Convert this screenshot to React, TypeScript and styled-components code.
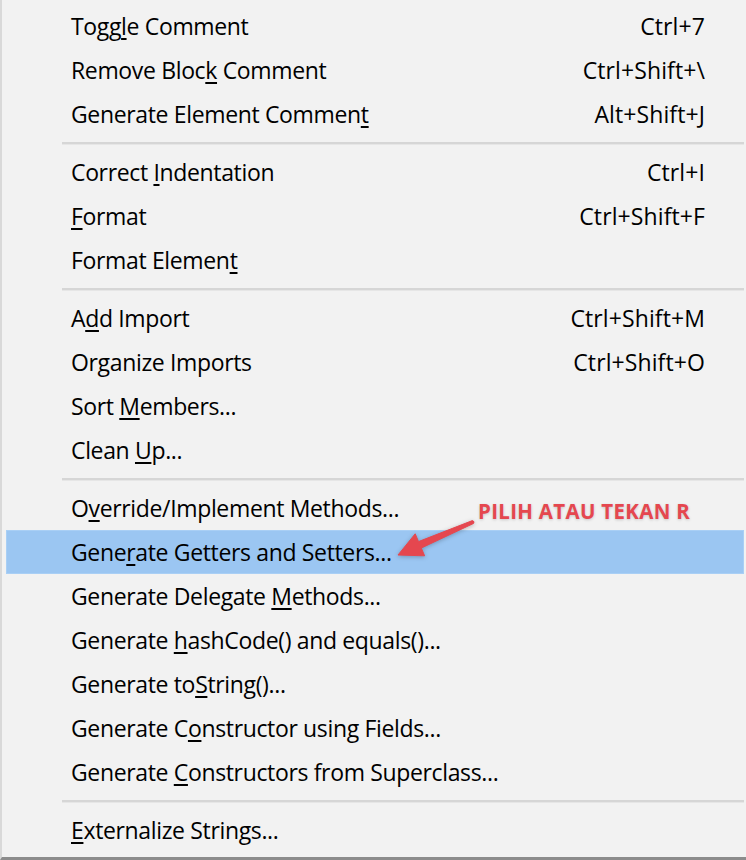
import React from "react";
import styled, { createGlobalStyle } from "styled-components";

const Global = createGlobalStyle`
  html, body { margin: 0; padding: 0; background: #f2f2f2; }
  body { width: 746px; height: 860px; overflow: hidden; }
`;

const Frame = styled.div`
  position: relative;
  width: 746px;
  height: 860px;
  box-sizing: border-box;
  background: #f2f2f2;
  border-left: 2px solid #d9d9d9;
  border-bottom: 3px solid #8c8c8c;
  padding-top: 4px;
  font-family: "Open Sans", "Noto Sans", sans-serif;
  color: #000;
`;

const List = styled.div`
  display: flex;
  flex-direction: column;
`;

const Row = styled.div<{ $active?: boolean }>`
  display: flex;
  align-items: center;
  justify-content: space-between;
  height: 44px;
  box-sizing: border-box;
  margin: 0 2px 0 4px;
  padding: 0 38px 0 64px;
  font-size: 23px;
  letter-spacing: -0.35px;
  background: ${(p) => (p.$active ? "#9bc6f2" : "transparent")};
  border: 1px solid ${(p) => (p.$active ? "#a9cff5" : "transparent")};
`;

const Label = styled.span`
  white-space: pre;
  u { text-decoration: underline; text-underline-offset: 3px; text-decoration-thickness: 1.5px; }
`;

const Shortcut = styled.span`
  white-space: pre;
  letter-spacing: 0.1px;
`;

const Separator = styled.div`
  height: 14px;
  display: flex;
  align-items: center;
  margin: 0 2px 0 60px;
  &::after {
    content: "";
    flex: 1;
    height: 2px;
    background: #d6d6d6;
    border-bottom: 1px solid #e6e6e6;
  }
`;

const Note = styled.div`
  position: absolute;
  left: 476px;
  top: 497px;
  font-family: "Open Sans", "Noto Sans", sans-serif;
  font-weight: 700;
  font-size: 20.5px;
  letter-spacing: 0.3px;
  color: #e5474f;
  text-shadow: 0 1px 3px rgba(0, 0, 0, 0.18);
  white-space: nowrap;
`;

const ArrowSvg = styled.svg`
  position: absolute;
  left: 0;
  top: 0;
  pointer-events: none;
  filter: drop-shadow(0 1px 2px rgba(0, 0, 0, 0.25));
`;

type Item =
  | { sep: true }
  | { sep?: false; pre: string; u: string; post: string; key?: string; active?: boolean };

const items: Item[] = [
  { pre: "Togg", u: "l", post: "e Comment", key: "Ctrl+7" },
  { pre: "Remove Bloc", u: "k", post: " Comment", key: "Ctrl+Shift+\\" },
  { pre: "Generate Element Commen", u: "t", post: "", key: "Alt+Shift+J" },
  { sep: true },
  { pre: "Correct ", u: "I", post: "ndentation", key: "Ctrl+I" },
  { pre: "", u: "F", post: "ormat", key: "Ctrl+Shift+F" },
  { pre: "Format Elemen", u: "t", post: "" },
  { sep: true },
  { pre: "A", u: "d", post: "d Import", key: "Ctrl+Shift+M" },
  { pre: "Or", u: "g", post: "anize Imports", key: "Ctrl+Shift+O" },
  { pre: "Sort ", u: "M", post: "embers..." },
  { pre: "Clean ", u: "U", post: "p..." },
  { sep: true },
  { pre: "O", u: "v", post: "erride/Implement Methods..." },
  { pre: "Gene", u: "r", post: "ate Getters and Setters...", active: true },
  { pre: "Generate Delegate ", u: "M", post: "ethods..." },
  { pre: "Generate ", u: "h", post: "ashCode() and equals()..." },
  { pre: "Generate to", u: "S", post: "tring()..." },
  { pre: "Generate C", u: "o", post: "nstructor using Fields..." },
  { pre: "Generate ", u: "C", post: "onstructors from Superclass..." },
  { sep: true },
  { pre: "", u: "E", post: "xternalize Strings..." },
];

export default function App() {
  return (
    <>
      <Global />
      <Frame>
        <List>
          {items.map((it, i) =>
            it.sep ? (
              <Separator key={i} />
            ) : (
              <Row key={i} $active={it.active}>
                <Label>
                  {it.pre}
                  <u>{it.u}</u>
                  {it.post}
                </Label>
                {it.key && <Shortcut>{it.key}</Shortcut>}
              </Row>
            )
          )}
        </List>
        <Note>PILIH ATAU TEKAN R</Note>
        <ArrowSvg width="746" height="860" viewBox="0 0 746 860">
          <path
            d="M470.4 520.6 L416.5 541.6 L413.2 533.8 L396 555 L422.6 555.8 L419.3 548 L471.6 523.4 Q473 521.5 470.4 520.6 Z"
            fill="#e5474f"
            stroke="#e5474f"
            strokeWidth="1"
            strokeLinejoin="round"
          />
        </ArrowSvg>
      </Frame>
    </>
  );
}
